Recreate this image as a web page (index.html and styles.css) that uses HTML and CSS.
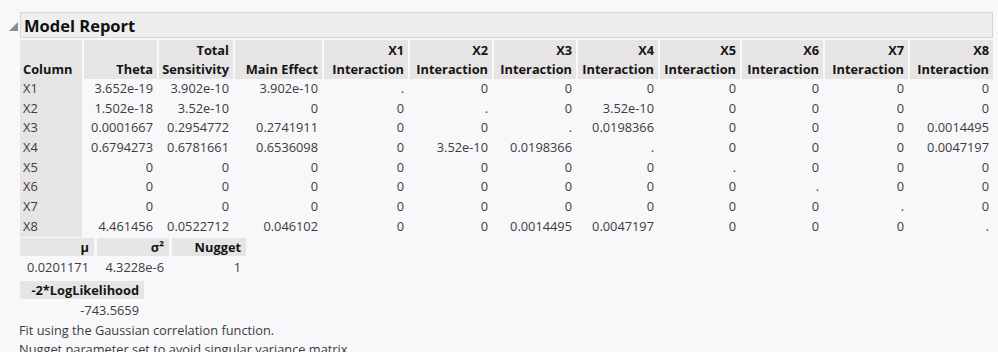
FILE: index.html
```html
<!DOCTYPE html>
<html lang="en">
<head>
<meta charset="utf-8">
<title>Model Report</title>
<link rel="stylesheet" href="styles.css">
</head>
<body>
<div class="page">
  <div class="title-row">
    <svg class="disclosure" width="9" height="9" viewBox="0 0 9 9"><polygon points="9,0 9,9 0,9" fill="#8d8d8d"/></svg>
    <div class="title-bar">Model Report</div>
  </div>
  <div class="content">
    <div class="main-grid">
      <div class="hd left">Column</div>
      <div class="hd">Theta</div>
      <div class="hd"><span>Total</span><span>Sensitivity</span></div>
      <div class="hd">Main Effect</div>
      <div class="hd"><span>X1</span><span>Interaction</span></div>
      <div class="hd"><span>X2</span><span>Interaction</span></div>
      <div class="hd"><span>X3</span><span>Interaction</span></div>
      <div class="hd"><span>X4</span><span>Interaction</span></div>
      <div class="hd"><span>X5</span><span>Interaction</span></div>
      <div class="hd"><span>X6</span><span>Interaction</span></div>
      <div class="hd"><span>X7</span><span>Interaction</span></div>
      <div class="hd"><span>X8</span><span>Interaction</span></div>

      <div class="rh">X1</div><div class="num">3.652e-19</div><div class="num">3.902e-10</div><div class="num">3.902e-10</div><div class="num">.</div><div class="num">0</div><div class="num">0</div><div class="num">0</div><div class="num">0</div><div class="num">0</div><div class="num">0</div><div class="num">0</div>
      <div class="rh">X2</div><div class="num">1.502e-18</div><div class="num">3.52e-10</div><div class="num">0</div><div class="num">0</div><div class="num">.</div><div class="num">0</div><div class="num">3.52e-10</div><div class="num">0</div><div class="num">0</div><div class="num">0</div><div class="num">0</div>
      <div class="rh">X3</div><div class="num">0.0001667</div><div class="num">0.2954772</div><div class="num">0.2741911</div><div class="num">0</div><div class="num">0</div><div class="num">.</div><div class="num">0.0198366</div><div class="num">0</div><div class="num">0</div><div class="num">0</div><div class="num">0.0014495</div>
      <div class="rh">X4</div><div class="num">0.6794273</div><div class="num">0.6781661</div><div class="num">0.6536098</div><div class="num">0</div><div class="num">3.52e-10</div><div class="num">0.0198366</div><div class="num">.</div><div class="num">0</div><div class="num">0</div><div class="num">0</div><div class="num">0.0047197</div>
      <div class="rh">X5</div><div class="num">0</div><div class="num">0</div><div class="num">0</div><div class="num">0</div><div class="num">0</div><div class="num">0</div><div class="num">0</div><div class="num">.</div><div class="num">0</div><div class="num">0</div><div class="num">0</div>
      <div class="rh">X6</div><div class="num">0</div><div class="num">0</div><div class="num">0</div><div class="num">0</div><div class="num">0</div><div class="num">0</div><div class="num">0</div><div class="num">0</div><div class="num">.</div><div class="num">0</div><div class="num">0</div>
      <div class="rh">X7</div><div class="num">0</div><div class="num">0</div><div class="num">0</div><div class="num">0</div><div class="num">0</div><div class="num">0</div><div class="num">0</div><div class="num">0</div><div class="num">0</div><div class="num">.</div><div class="num">0</div>
      <div class="rh">X8</div><div class="num">4.461456</div><div class="num">0.0522712</div><div class="num">0.046102</div><div class="num">0</div><div class="num">0</div><div class="num">0.0014495</div><div class="num">0.0047197</div><div class="num">0</div><div class="num">0</div><div class="num">0</div><div class="num">.</div>
    </div>

    <div class="param-grid">
      <div class="hd1">μ</div>
      <div class="hd1">σ²</div>
      <div class="hd1">Nugget</div>
      <div class="val">0.0201171</div>
      <div class="val">4.3228e-6</div>
      <div class="val">1</div>
    </div>

    <div class="ll-grid">
      <div class="hd1">-2*LogLikelihood</div>
      <div class="val">-743.5659</div>
    </div>

    <div class="notes">
      <p>Fit using the Gaussian correlation function.</p>
      <p>Nugget parameter set to avoid singular variance matrix.</p>
    </div>
  </div>
</div>
</body>
</html>
```

FILE: styles.css
```css
html, body {
  margin: 0;
  padding: 0;
  background: #f8f7f9;
  height: 100%;
  overflow: hidden;
}

body {
  font-family: "Open Sans", "Noto Sans", "DejaVu Sans", sans-serif;
  font-size: 12.8px;
  color: #3c3c3c;
}

.page {
  padding: 12px 5px 0 9px;
}

.title-row {
  display: flex;
  align-items: center;
  gap: 2px;
}

.disclosure {
  flex: none;
  margin-top: 2px;
}

.title-bar {
  flex: 1;
  height: 24px;
  border: 1px solid #d6d6d6;
  background: #eeeeee;
  padding-left: 3px;
  font-weight: 700;
  font-size: 16.5px;
  line-height: 25px;
  color: #101010;
}

.content {
  padding-left: 11px;
  margin-top: 2px;
}

.main-grid {
  display: grid;
  grid-template-columns: 62px 73px 74px 87px 84px 82px 82px 80px 80px 81px 83px 83px;
  grid-template-rows: 39px;
  grid-auto-rows: 19.7px;
  column-gap: 2px;
}

.hd {
  background: #e6e4e4;
  display: flex;
  flex-direction: column;
  justify-content: flex-end;
  align-items: flex-end;
  padding: 0 4px 1px 3px;
  font-weight: 700;
  line-height: 18.5px;
  color: #151515;
}

.hd.left {
  align-items: flex-start;
}

.rh {
  background: #e6e4e4;
  padding-left: 3px;
  line-height: 19.7px;
}

.num {
  text-align: right;
  padding-right: 4px;
  line-height: 19.7px;
  white-space: nowrap;
}

.param-grid {
  display: grid;
  grid-template-columns: 74px 72px 74px;
  grid-template-rows: 18px 22px;
  column-gap: 3px;
  margin-top: 1px;
  width: max-content;
}

.hd1 {
  background: #e6e4e4;
  text-align: right;
  font-weight: 700;
  color: #151515;
  line-height: 18px;
  padding-right: 5px;
  white-space: nowrap;
}

.val {
  text-align: right;
  padding-right: 5px;
  line-height: 22px;
  white-space: nowrap;
}

.ll-grid {
  display: grid;
  grid-template-columns: 124px;
  grid-template-rows: 18px 22px;
  margin-top: 3px;
  width: max-content;
}

.notes {
  margin-left: -1px;
}

.notes p {
  margin: 0;
  line-height: 19px;
  white-space: nowrap;
}
```
